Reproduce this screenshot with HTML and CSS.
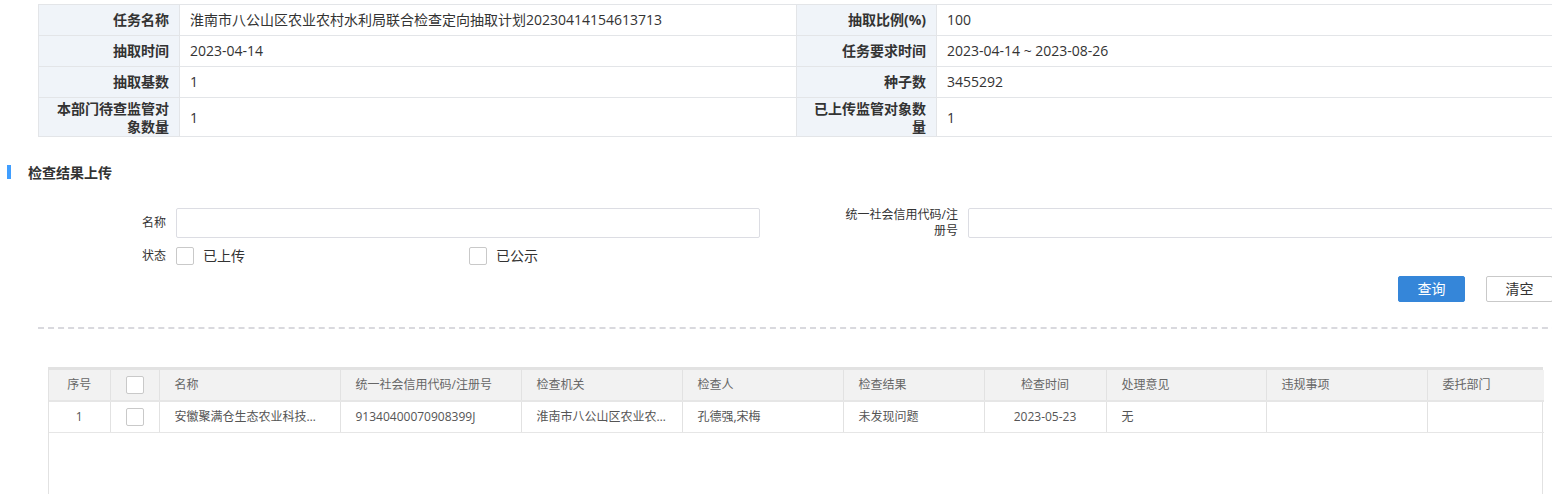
FILE: index.html
```html
<!DOCTYPE html>
<html lang="zh-CN">
<head>
<meta charset="utf-8">
<title>检查结果上传</title>
<link rel="stylesheet" href="styles.css">
</head>
<body>
<div class="page">
  <table class="info">
    <colgroup>
      <col class="c-label1"><col class="c-val1"><col class="c-label2"><col>
    </colgroup>
    <tbody>
      <tr class="row">
        <th>任务名称</th><td>淮南市八公山区农业农村水利局联合检查定向抽取计划20230414154613713</td>
        <th>抽取比例(%)</th><td>100</td>
      </tr>
      <tr class="row">
        <th>抽取时间</th><td>2023-04-14</td>
        <th>任务要求时间</th><td>2023-04-14 ~ 2023-08-26</td>
      </tr>
      <tr class="row">
        <th>抽取基数</th><td>1</td>
        <th>种子数</th><td>3455292</td>
      </tr>
      <tr class="row tall">
        <th>本部门待查监管对象数量</th><td>1</td>
        <th>已上传监管对象数量</th><td>1</td>
      </tr>
    </tbody>
  </table>

  <h2 class="section-title"><span class="bar"></span>检查结果上传</h2>

  <form class="search">
    <div class="field">
      <label class="f-label">名称</label>
      <input class="f-input" type="text">
    </div>
    <div class="field">
      <label class="f-label">统一社会信用代码/注册号</label>
      <input class="f-input" type="text">
    </div>
    <div class="field status">
      <label class="f-label">状态</label>
      <div class="options">
        <label class="opt"><span class="box"></span>已上传</label>
        <label class="opt"><span class="box"></span>已公示</label>
      </div>
    </div>
  </form>

  <div class="actions">
    <button class="btn primary" type="button">查询</button>
    <button class="btn" type="button">清空</button>
  </div>

  <div class="divider"></div>

  <div class="grid-wrap">
    <table class="grid">
      <colgroup>
        <col style="width:61px"><col style="width:49px"><col style="width:181px"><col style="width:181px">
        <col style="width:161px"><col style="width:161px"><col style="width:141px"><col style="width:122px">
        <col style="width:160px"><col style="width:161px"><col style="width:117px">
      </colgroup>
      <thead>
        <tr>
          <th class="center">序号</th>
          <th class="center"><span class="box"></span></th>
          <th>名称</th>
          <th>统一社会信用代码/注册号</th>
          <th>检查机关</th>
          <th>检查人</th>
          <th>检查结果</th>
          <th class="center">检查时间</th>
          <th>处理意见</th>
          <th>违规事项</th>
          <th>委托部门</th>
        </tr>
      </thead>
      <tbody>
        <tr>
          <td class="center">1</td>
          <td class="center"><span class="box"></span></td>
          <td>安徽聚满仓生态农业科技有限公司</td>
          <td>91340400070908399J</td>
          <td>淮南市八公山区农业农村水利局</td>
          <td>孔德强,宋梅</td>
          <td>未发现问题</td>
          <td class="center">2023-05-23</td>
          <td>无</td>
          <td></td>
          <td></td>
        </tr>
      </tbody>
    </table>
  </div>
</div>
</body>
</html>
```

FILE: styles.css
```css
html, body {
  margin: 0;
  padding: 0;
  background: #fff;
  overflow: hidden;
}

body {
  font-family: "Open Sans", "Noto Sans CJK SC", sans-serif;
  color: #333;
  font-size: 14px;
}

.page {
  width: 1600px;
  padding-top: 4px;
}

/* ---------- info table ---------- */
.info {
  margin-left: 38px;
  width: 1540px;
  border-collapse: collapse;
  table-layout: fixed;
}

.info .c-label1 { width: 141px; }
.info .c-val1 { width: 617px; }
.info .c-label2 { width: 140px; }

.info th,
.info td {
  border: 1px solid #e3e5e8;
  font-size: 14px;
  line-height: 18px;
  padding: 6px 10px;
  height: 30px;
  box-sizing: border-box;
}

.info th {
  background: #f0f4f9;
  font-weight: bold;
  text-align: right;
  color: #333;
}

.info td {
  text-align: left;
  color: #333;
}

.info .tall th,
.info .tall td {
  height: 39px;
  padding-top: 1px;
  padding-bottom: 0;
}

/* ---------- section title ---------- */
.section-title {
  display: flex;
  align-items: center;
  margin: 25px 0 0 7px;
  height: 20px;
  font-size: 14px;
  font-weight: bold;
  color: #333;
}

.section-title .bar {
  width: 4px;
  height: 14px;
  background: #409eff;
  margin-right: 17px;
}

/* ---------- search form ---------- */
.search {
  margin: 25px 0 0 48px;
  display: grid;
  grid-template-columns: 712px 713px;
  column-gap: 80px;
  row-gap: 8px;
}

.field {
  display: flex;
  align-items: center;
}

.f-label {
  width: 118px;
  margin-right: 10px;
  text-align: right;
  font-size: 12px;
  line-height: 16px;
  color: #333;
  flex: none;
}

.f-input {
  flex: 1;
  height: 30px;
  box-sizing: border-box;
  border: 1px solid #dcdde3;
  border-radius: 2px;
  margin: 0;
  padding: 0 8px;
  outline: none;
}

.status {
  grid-column: 1;
  height: 18px;
}

.options {
  flex: 1;
  display: flex;
}

.opt {
  width: 293px;
  display: flex;
  align-items: center;
  font-size: 14px;
  line-height: 18px;
  color: #333;
}

.box {
  display: inline-block;
  width: 18px;
  height: 18px;
  box-sizing: border-box;
  border: 1px solid #c9c9c9;
  border-radius: 2px;
  background: #fff;
  vertical-align: middle;
}

.opt .box {
  margin-right: 9px;
}

/* ---------- actions ---------- */
.actions {
  width: 1553px;
  display: flex;
  justify-content: flex-end;
  gap: 21px;
  margin-top: 11px;
}

.btn {
  width: 67px;
  height: 26px;
  box-sizing: border-box;
  border: 1px solid #c9c9c9;
  border-radius: 2px;
  background: #fff;
  color: #333;
  font-family: "Open Sans", "Noto Sans CJK SC", sans-serif;
  font-size: 14px;
  line-height: 24px;
  padding: 0;
}

.btn.primary {
  background: #3586d9;
  border-color: #3586d9;
  color: #fff;
}

/* ---------- divider ---------- */
.divider {
  margin: 25px 0 0 38px;
  border-top: 2px dashed #d9d9de;
  width: 1540px;
}

/* ---------- result grid ---------- */
.grid-wrap {
  margin: 38px 0 0 48px;
  width: 1495px;
  height: 200px;
  box-sizing: border-box;
  border-left: 1px solid #e2e2e2;
  border-right: 1px solid #e2e2e2;
  border-top: 3px solid #e2e2e2;
}

.grid {
  width: 1494px;
  border-collapse: collapse;
  table-layout: fixed;
  font-size: 12px;
  color: #666;
}

.grid th,
.grid td {
  text-align: left;
  font-weight: normal;
  padding: 0 15px;
  white-space: nowrap;
  overflow: hidden;
  text-overflow: ellipsis;
  border-left: 1px solid #e2e2e2;
  line-height: 16px;
}

.grid th:first-child,
.grid td:first-child {
  border-left: none;
}

.grid th {
  height: 30px;
  background: #f2f2f2;
  border-bottom: 2px solid #e6e6e6;
}

.grid td {
  height: 30px;
  border-bottom: 1px solid #e6e6e6;
  color: #555;
}

.grid .center {
  text-align: center;
  padding: 0 4px;
}
```
